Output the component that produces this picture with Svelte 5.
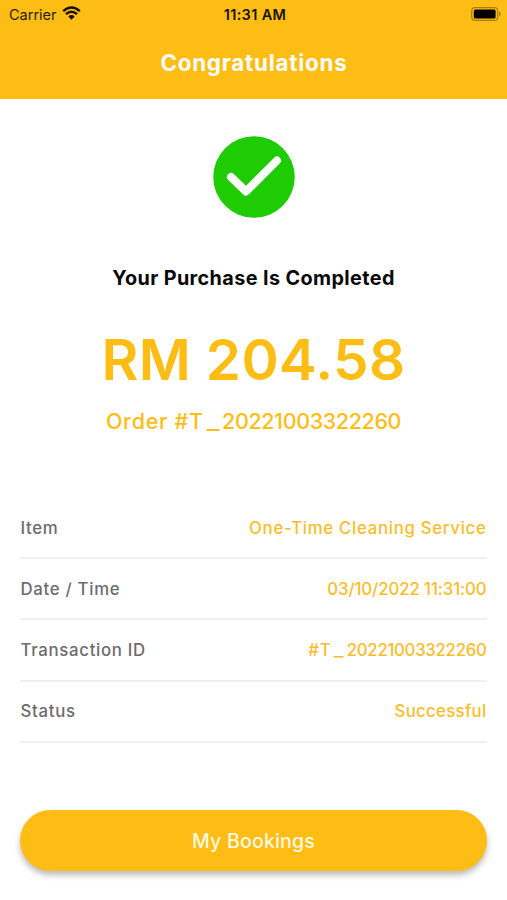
<script>
  const reference = '20221003322260';
  const rows = [
    { label: 'Item', value: 'One-Time Cleaning Service', kind: 'item' },
    { label: 'Date / Time', value: '03/10/2022 11:31:00', kind: 'date' },
    { label: 'Transaction ID', kind: 'transaction' },
    { label: 'Status', value: 'Successful', kind: 'status' }
  ];
</script>

{#snippet transactionId()}<span class="prefix">#T</span><span class="underscore">_</span><span class="digits">{reference}</span>{/snippet}

<div class="screen">
  <header>
    <div class="statusbar">
      <div class="carrier">
        <span>Carrier</span>
        <svg width="19" height="14" viewBox="0 0 19 14" aria-hidden="true">
          <path d="M1.2 5.1Q9.5 -2.1 17.8 5.1" fill="none" stroke="#171204" stroke-width="2.5" />
          <path d="M3.9 8.2Q9.5 3.2 15.1 8.2" fill="none" stroke="#171204" stroke-width="2.4" />
          <path d="M6.3 10.5Q9.5 7.6 12.7 10.5L9.5 13.8Z" fill="#171204" />
        </svg>
      </div>
      <time>11:31 AM</time>
      <svg class="battery" width="30" height="14" viewBox="0 0 30 14" aria-hidden="true">
        <rect x="0.7" y="0.7" width="26" height="12.6" rx="3.4" fill="none" stroke="#a87d10" stroke-width="1.2" />
        <rect x="2.8" y="2.5" width="21.8" height="9" rx="1.6" fill="#000" />
        <path d="M28 4.8Q29.8 5.5 29.8 7Q29.8 8.5 28 9.2Z" fill="#a87d10" />
      </svg>
    </div>
    <h1>Congratulations</h1>
  </header>

  <main>
    <svg class="check" width="82" height="82" viewBox="0 0 82 82" aria-hidden="true">
      <circle cx="41" cy="41" r="40.8" fill="#1fcb02" />
      <path d="M18 41L33 55.5L64 24.5" fill="none" stroke="#fff" stroke-width="8" stroke-linecap="round" stroke-linejoin="round" />
    </svg>
    <h2>Your Purchase Is Completed</h2>
    <p class="amount">RM 204.58</p>
    <p class="order"><span class="word">Order{' '}</span>{@render transactionId()}</p>

    <dl>
      {#each rows as row}
        <div class="row">
          <dt>{row.label}</dt>
          <dd class={row.kind}>
            {#if row.value}{row.value}{:else}{@render transactionId()}{/if}
          </dd>
        </div>
      {/each}
    </dl>

    <button type="button">My Bookings</button>
  </main>
</div>

<style>
  :global(body) { margin: 0; background: #fff; }
  .screen {
    width: 507px;
    height: 900px;
    overflow: hidden;
    background: #fff;
    font-family: Inter, "Open Sans", sans-serif;
    white-space: nowrap;
  }
  header { height: 98.5px; background: #fdbd14; }
  .statusbar {
    box-sizing: border-box;
    height: 28px;
    padding: 0 6px 0 9px;
    display: grid;
    grid-template-columns: 1fr auto 1fr;
    align-items: center;
    font-size: 14.5px;
    color: #2b2108;
  }
  .carrier { display: flex; align-items: center; gap: 5px; }
  .carrier svg { margin-top: -3px; }
  time { font-weight: 600; letter-spacing: 0.35px; color: #171204; }
  .battery { justify-self: end; margin-top: -1px; }
  h1 {
    margin: 0;
    height: 69px;
    padding-left: 1px;
    display: flex;
    align-items: center;
    justify-content: center;
    color: #fff;
    font-size: 22.3px;
    font-weight: 700;
    letter-spacing: 0.8px;
  }
  main { display: flex; flex-direction: column; align-items: center; padding: 37.5px 20px 0; }
  .check { display: block; }
  h2 {
    margin: 44.5px 0 0;
    font-size: 19.8px;
    line-height: 30px;
    font-weight: 700;
    letter-spacing: 0.4px;
    color: #090909;
  }
  p { margin: 0; color: #fdbd14; }
  .amount { margin-top: 31.5px; font-size: 56.5px; line-height: 72px; font-weight: 600; letter-spacing: 0.4px; }
  .order { margin-top: 9px; font-size: 21.5px; line-height: 32px; font-weight: 500; }
  .word { letter-spacing: 0.7px; white-space: pre; }
  .prefix { letter-spacing: 0.04em; }
  .underscore { display: inline-block; width: 0.84em; text-align: center; transform: scaleX(1.28); }
  .digits { letter-spacing: -0.018em; }
  dl { width: 467px; margin: 61px 0 0; }
  .row {
    box-sizing: border-box;
    height: 61.2px;
    border-bottom: 2px solid #f0f0f0;
    display: flex;
    align-items: center;
    justify-content: space-between;
    font-size: 16.8px;
    font-weight: 500;
  }
  dt { padding-left: 0.5px; letter-spacing: 0.7px; color: #6c6c6c; }
  dd { margin: 0 0.5px 0 0; color: #f9bd2b; }
  .item { letter-spacing: 0.7px; }
  .date { letter-spacing: -0.1px; }
  .transaction .underscore { width: 0.92em; }
  .status { letter-spacing: 0.3px; }
  button {
    width: 467px;
    height: 61px;
    margin-top: 67px;
    padding: 1px 0 0;
    border: 0;
    border-radius: 31px;
    background: #fdbd14;
    box-shadow: 0 4px 6px rgba(0, 0, 0, 0.27);
    color: #fff8e0;
    font-family: inherit;
    font-size: 19.5px;
    font-weight: 500;
    letter-spacing: 0.2px;
  }
</style>
